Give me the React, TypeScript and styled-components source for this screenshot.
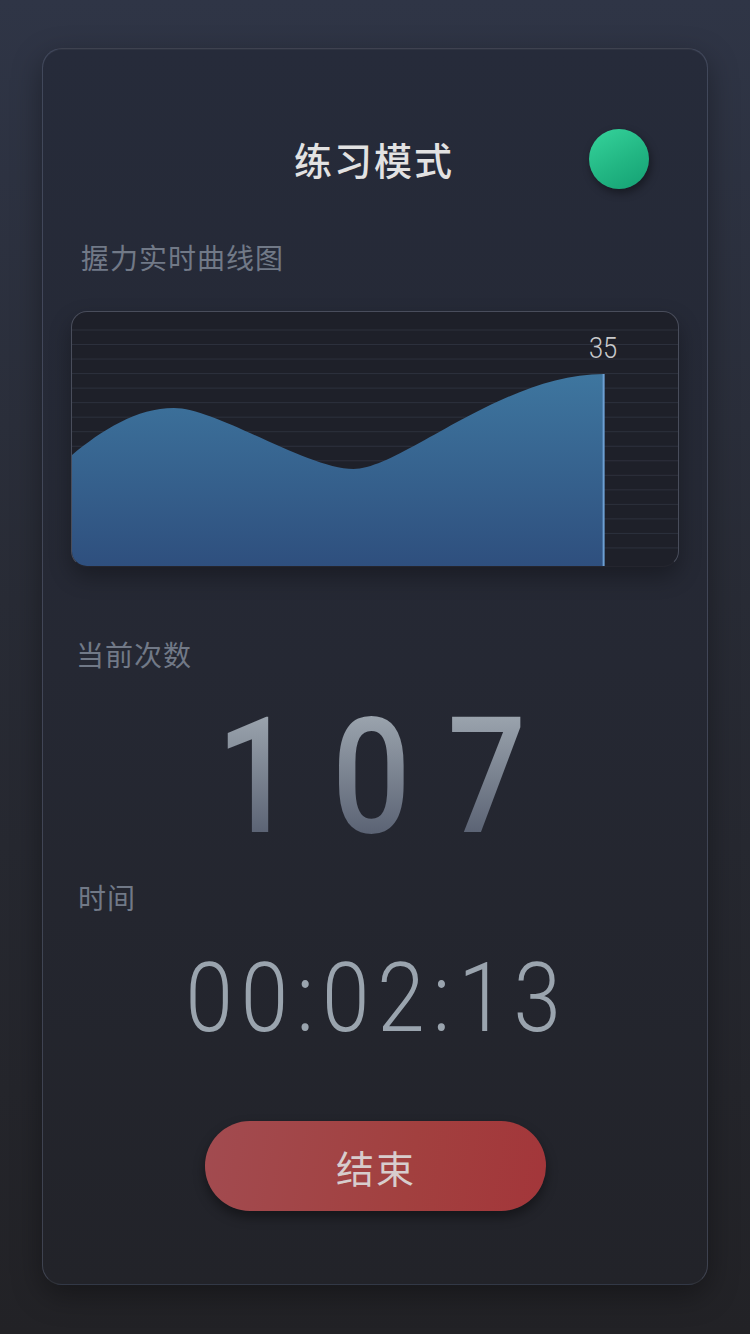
import React from "react";
import styled, { createGlobalStyle } from "styled-components";

const GlobalStyle = createGlobalStyle`
  html, body { margin: 0; padding: 0; }
  body {
    min-height: 1334px;
    background: linear-gradient(180deg, #2f3546 0%, #282b35 45%, #222226 100%);
    font-family: "Noto Sans CJK SC", "Noto Sans", sans-serif;
  }
  * { box-sizing: border-box; }
`;

const Page = styled.div`
  padding: 48px 42px 49px;
`;

const Card = styled.div`
  border-radius: 20px;
  border: 1px solid rgba(130, 140, 170, 0.3);
  border-bottom-color: rgba(90, 95, 110, 0.25);
  background: linear-gradient(180deg, #262b3a 0%, #252833 50%, #222329 100%);
  box-shadow: 0 10px 30px rgba(0, 0, 0, 0.35), inset 0 1px 0 rgba(255, 255, 255, 0.04);
  padding: 80px 28px 73px 28px;
  display: flex;
  flex-direction: column;
`;

const TitleRow = styled.div`
  height: 60px;
  display: grid;
  grid-template-columns: 1fr auto 1fr;
  align-items: center;
`;

const Title = styled.h1`
  grid-column: 2;
  margin: 0;
  font-size: 38px;
  line-height: 60px;
  font-weight: 500;
  letter-spacing: 2px;
  color: #e2e2e2;
  margin-right: 2px;
`;

const StatusDot = styled.div`
  grid-column: 3;
  justify-self: end;
  margin-right: 30px;
  width: 60px;
  height: 60px;
  border-radius: 50%;
  background: linear-gradient(150deg, #36d49c 0%, #22b683 55%, #14a073 100%);
  box-shadow: 2px 4px 8px rgba(0, 0, 0, 0.4);
`;

const Label = styled.div<{ $indent: number; $top: number }>`
  margin-top: ${(p) => p.$top}px;
  padding-left: ${(p) => p.$indent}px;
  font-size: 28px;
  line-height: 40px;
  height: 40px;
  letter-spacing: 1px;
  color: #717987;
`;

const ChartBox = styled.div`
  margin-top: 34px;
  height: 256px;
  border-radius: 16px;
  background: #1e2029;
  border: 1px solid rgba(110, 115, 135, 0.55);
  border-bottom-color: rgba(40, 42, 50, 0.6);
  overflow: hidden;
  box-shadow: 0 10px 22px rgba(0, 0, 0, 0.3);
`;

const ChartSvg = styled.svg`
  display: block;
  width: 100%;
  height: 100%;
`;

const Count = styled.div`
  margin-top: 23px;
  height: 161px;
  display: flex;
  justify-content: center;
`;

const CountDigits = styled.span`
  display: inline-block;
  font-family: Roboto, "Liberation Sans", sans-serif;
  font-weight: 500;
  font-size: 161px;
  line-height: 161px;
  letter-spacing: 43px;
  padding-left: 43px;
  transform: translateX(-4px) scaleX(0.86);
  background: linear-gradient(180deg, #9aa3ad 0%, #9aa3ad 12%, #5a6273 86%, #5a6273 100%);
  -webkit-background-clip: text;
  background-clip: text;
  color: transparent;
`;

const Timer = styled.div`
  margin-top: 33px;
  height: 97px;
  display: flex;
  justify-content: center;
`;

const TimerText = styled.span`
  display: inline-block;
  font-family: Roboto, "Liberation Sans", sans-serif;
  font-weight: 300;
  font-size: 97px;
  line-height: 97px;
  color: #9aa4ae;
  letter-spacing: 9px;
  padding-left: 9px;
  transform: translateX(-2px) scaleX(0.88);
  white-space: nowrap;
`;

const EndButton = styled.button`
  margin: 74px auto 0;
  width: 341px;
  height: 90px;
  border: none;
  border-radius: 45px;
  background: linear-gradient(100deg, #a24b50 0%, #a2403f 60%, #a3363a 100%);
  box-shadow: 0 6px 12px rgba(0, 0, 0, 0.4);
  color: #d7cdcd;
  font-family: "Noto Sans CJK SC", sans-serif;
  font-size: 38px;
  letter-spacing: 2px;
  padding: 0 0 0 2px;
  cursor: pointer;
`;

const gridYs = Array.from({ length: 16 }, (_, i) => 18 + i * 14.53);

const areaPath =
  "M0,143 C30,118 65,96 102,96 C145,96 235,157 282,157 C330,157 430,62 533,62 L533,260 L0,260 Z";

function ForceChart() {
  return (
    <ChartSvg viewBox="0 0 607 254" preserveAspectRatio="none">
      <defs>
        <linearGradient id="area" x1="0" y1="0" x2="0" y2="1">
          <stop offset="0%" stopColor="#3e769f" />
          <stop offset="100%" stopColor="#2e4e7d" />
        </linearGradient>
      </defs>
      {gridYs.map((y) => (
        <line key={y} x1="0" x2="607" y1={y} y2={y} stroke="#2d313d" strokeWidth="1" />
      ))}
      <path d={areaPath} fill="url(#area)" />
      <line x1="532.5" x2="532.5" y1="62" y2="254" stroke="#6c9fd2" strokeWidth="2" />
      <text
        x="532"
        y="46"
        textAnchor="middle"
        fontFamily="Roboto, 'Liberation Sans', sans-serif"
        fontWeight="300"
        fontSize="30"
        fill="#c9c9cb"
        transform="translate(532 0) scale(0.85 1) translate(-532 0)"
      >
        35
      </text>
    </ChartSvg>
  );
}

export default function App() {
  return (
    <>
      <GlobalStyle />
      <Page>
        <Card>
          <TitleRow>
            <Title>练习模式</Title>
            <StatusDot />
          </TitleRow>
          <Label $indent={10} $top={48}>握力实时曲线图</Label>
          <ChartBox>
            <ForceChart />
          </ChartBox>
          <Label $indent={5} $top={67}>当前次数</Label>
          <Count>
            <CountDigits>107</CountDigits>
          </Count>
          <Label $indent={7} $top={19}>时间</Label>
          <Timer>
            <TimerText>00:02:13</TimerText>
          </Timer>
          <EndButton>结束</EndButton>
        </Card>
      </Page>
    </>
  );
}
